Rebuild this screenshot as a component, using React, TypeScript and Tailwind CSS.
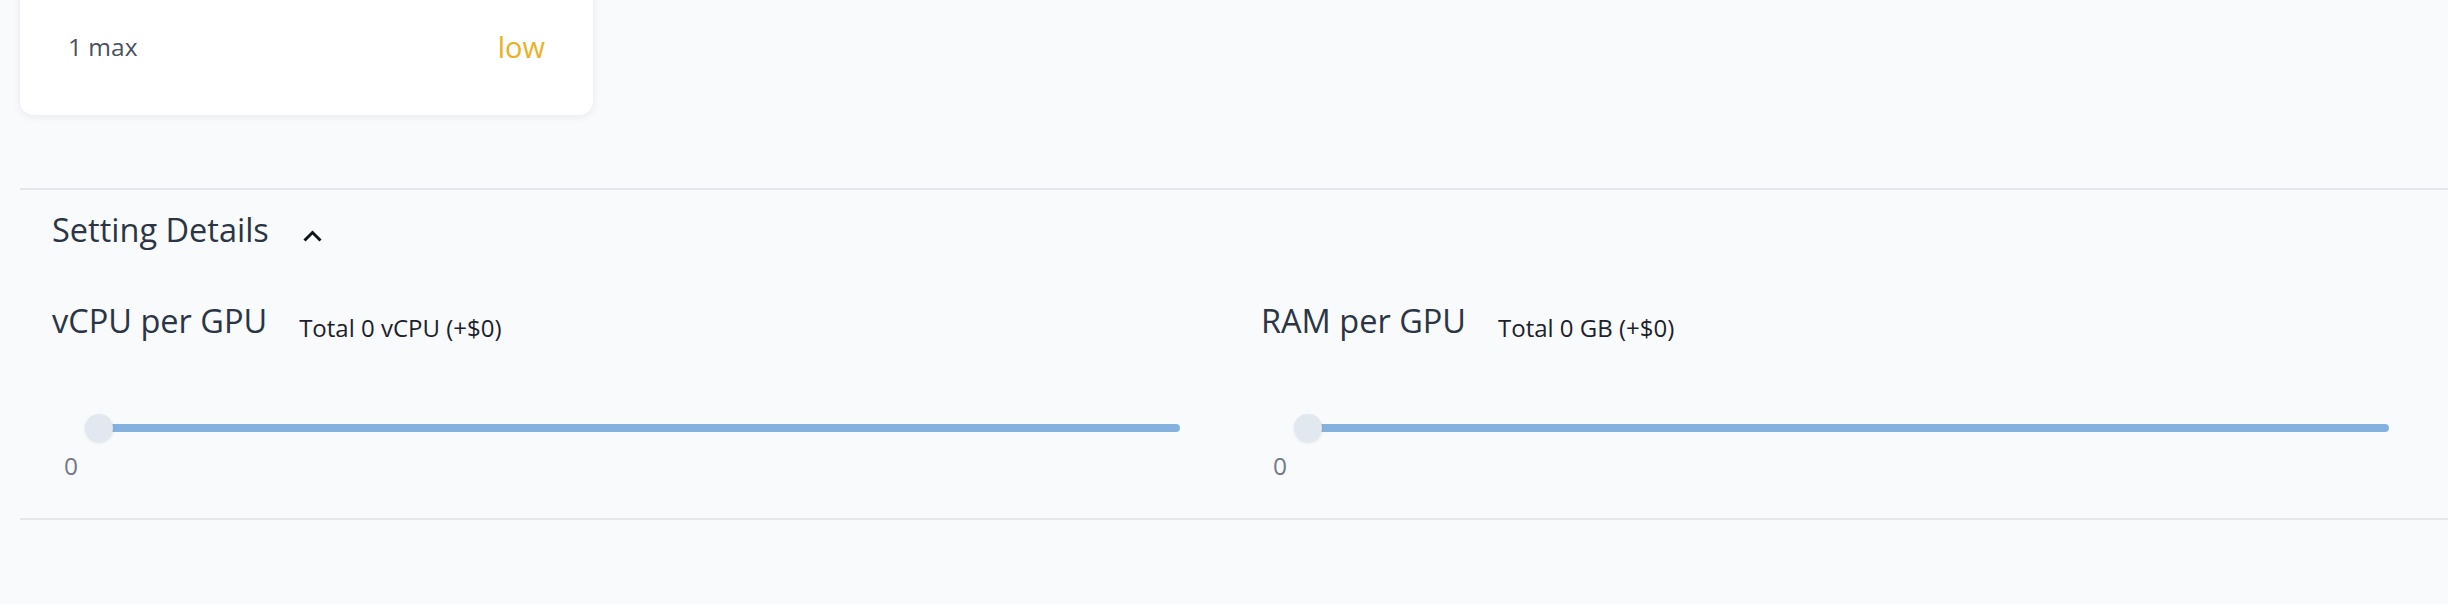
import React from "react";

function Slider() {
  return (
    <div className="relative h-[28px] ml-[33px] mr-[29px]">
      <div className="absolute left-[14px] right-0 top-[10px] h-[8px] rounded-full bg-[#85b1df]" />
      <div className="absolute left-0 top-0 w-[28px] h-[28px] rounded-full bg-[#e2e8f0] shadow-[0_1px_3px_rgba(0,0,0,0.10)]" />
    </div>
  );
}

function Column({ title, total }: { title: string; total: string }) {
  return (
    <div className="flex flex-col">
      <div className="flex items-end gap-8">
        <span className="text-[32.5px] leading-[48px] text-[#2b3545]">{title}</span>
        <span className="text-[24px] leading-[34px] text-[#1c222d]">{total}</span>
      </div>
      <div className="mt-[69px]">
        <Slider />
      </div>
      <div className="mt-[6px] ml-[12px] text-[24.5px] leading-[36px] text-[#737a85]">0</div>
    </div>
  );
}

export default function App() {
  return (
    <div
      className="w-[2448px] h-[604px] bg-[#f9fafc] overflow-hidden"
      style={{ fontFamily: '"Open Sans", "Noto Sans", sans-serif' }}
    >
      <div className="pl-[20px]">
        <div className="w-[573px] -mt-[40px] pt-[69px] pb-[50px] px-[48px] bg-white rounded-[14px] shadow-[0_2px_8px_rgba(15,23,42,0.07)]">
          <div className="h-[36px] flex items-center justify-between">
            <span className="text-[24.5px] leading-[36px] text-[#4a5261]">1 max</span>
            <span className="text-[29px] leading-[36px] text-[#ebb025]">low</span>
          </div>
        </div>
      </div>
      <div className="ml-[20px] mt-[73px] border-t-2 border-b-2 border-[#e5e7eb] pt-[16px] pb-[34px] pl-[32px]">
        <div className="flex items-center">
          <span className="text-[32.5px] leading-[48px] text-[#2b3545]">Setting Details</span>
          <svg className="ml-[34px] mt-[10px]" width="19" height="13" viewBox="0 0 19 13" fill="none">
            <path d="M1.5 11.5 L9.5 3.5 L17.5 11.5" stroke="#111418" strokeWidth="3" strokeLinecap="butt" strokeLinejoin="miter" />
          </svg>
        </div>
        <div className="mt-[43px] grid grid-cols-[1157px_1157px] gap-x-[52px]">
          <Column title="vCPU per GPU" total="Total 0 vCPU (+$0)" />
          <Column title="RAM per GPU" total="Total 0 GB (+$0)" />
        </div>
      </div>
    </div>
  );
}
